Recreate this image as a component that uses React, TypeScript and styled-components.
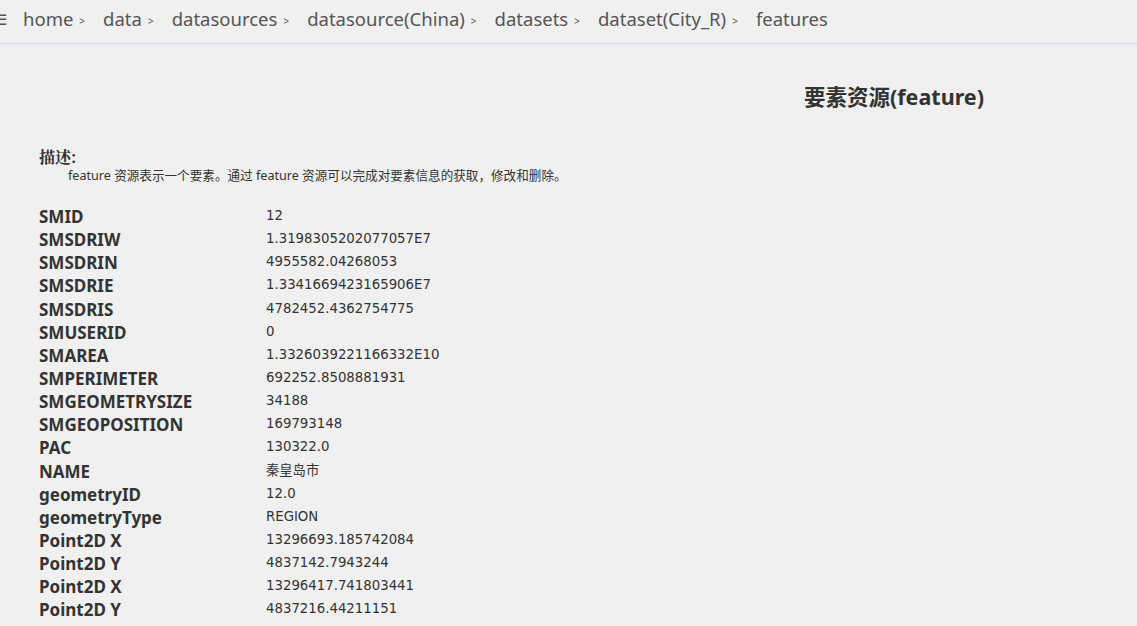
import styled, { createGlobalStyle } from "styled-components";

const GlobalStyle = createGlobalStyle`
  html, body {
    margin: 0;
    padding: 0;
    background: #f0f0f0;
    font-family: "Noto Sans", "Noto Sans CJK SC", sans-serif;
    color: #333;
    overflow: hidden;
  }
`;

const Page = styled.div`
  width: 1137px;
  height: 626px;
  background: #f0f0f0;
  overflow: hidden;
`;

const Crumbs = styled.nav`
  display: flex;
  align-items: center;
  height: 37px;
  padding: 0 0 6px 0;
  border-bottom: 1px solid #d5dbe8;
  margin-left: -6px;
`;

const MenuIcon = styled.span`
  display: inline-block;
  width: 14px;
  font-size: 15px;
  color: #555;
  margin-right: 15px;
`;

const Crumb = styled.span`
  font-size: 18.5px;
  color: #555;
  display: flex;
  align-items: center;
`;

const Sep = styled.span`
  font-size: 10px;
  color: #555;
  margin: 4px 18px 0 6px;
`;

const Title = styled.h2`
  margin: 39px 0 0 804px;
  font-size: 21.5px;
  font-weight: bold;
  color: #333;
  line-height: 28px;
`;

const Desc = styled.div`
  margin: 37px 0 0 39px;
`;

const DescHead = styled.div`
  font-family: "Noto Serif CJK SC", "Noto Sans CJK SC", serif;
  font-size: 16px;
  font-weight: bold;
  line-height: 18px;
  color: #333;
`;

const DescBody = styled.div`
  font-size: 12.6px;
  line-height: 20px;
  padding-left: 29px;
  color: #333;
`;

const Fields = styled.dl`
  display: grid;
  grid-template-columns: 227px 1fr;
  grid-auto-rows: 23.15px;
  margin: 19px 0 0 39px;
`;

const Key = styled.dt`
  font-size: 17px;
  font-weight: bold;
  color: #333;
  line-height: 23px;
`;

const Value = styled.dd`
  margin: 0;
  font-family: "DejaVu Sans", "Noto Sans CJK SC", sans-serif;
  font-size: 13.3px;
  color: #333;
  line-height: 22px;
`;

const crumbs = [
  "home",
  "data",
  "datasources",
  "datasource(China)",
  "datasets",
  "dataset(City_R)",
  "features",
];

const rows: [string, string][] = [
  ["SMID", "12"],
  ["SMSDRIW", "1.3198305202077057E7"],
  ["SMSDRIN", "4955582.04268053"],
  ["SMSDRIE", "1.3341669423165906E7"],
  ["SMSDRIS", "4782452.4362754775"],
  ["SMUSERID", "0"],
  ["SMAREA", "1.3326039221166332E10"],
  ["SMPERIMETER", "692252.8508881931"],
  ["SMGEOMETRYSIZE", "34188"],
  ["SMGEOPOSITION", "169793148"],
  ["PAC", "130322.0"],
  ["NAME", "秦皇岛市"],
  ["geometryID", "12.0"],
  ["geometryType", "REGION"],
  ["Point2D X", "13296693.185742084"],
  ["Point2D Y", "4837142.7943244"],
  ["Point2D X", "13296417.741803441"],
  ["Point2D Y", "4837216.44211151"],
];

export default function App() {
  return (
    <Page>
      <GlobalStyle />
      <Crumbs>
        <MenuIcon>☰</MenuIcon>
        {crumbs.map((c, i) => (
          <Crumb key={c}>
            {c}
            {i < crumbs.length - 1 && <Sep>&gt;</Sep>}
          </Crumb>
        ))}
      </Crumbs>
      <Title>要素资源(feature)</Title>
      <Desc>
        <DescHead>描述:</DescHead>
        <DescBody>
          feature 资源表示一个要素。通过 feature 资源可以完成对要素信息的获取，修改和删除。
        </DescBody>
      </Desc>
      <Fields>
        {rows.map(([k, v], i) => (
          <>
            <Key key={"k" + i}>{k}</Key>
            <Value key={"v" + i}>{v}</Value>
          </>
        ))}
      </Fields>
    </Page>
  );
}
